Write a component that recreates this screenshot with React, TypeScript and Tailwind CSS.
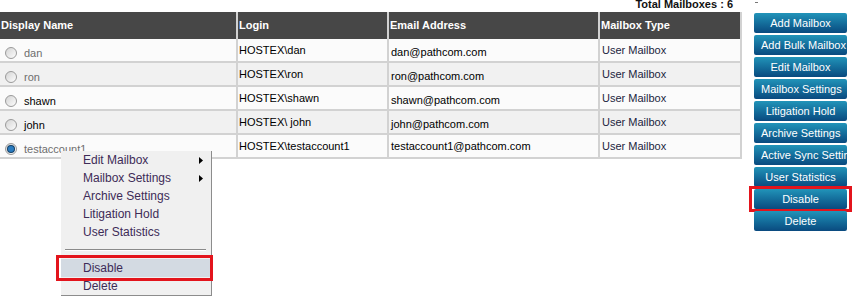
import React from "react";

type Row = {
  name: string;
  login: string;
  email: string;
  dim: boolean;
  checked?: boolean;
};

const rows: Row[] = [
  { name: "dan", login: "HOSTEX\\dan", email: "dan@pathcom.com", dim: true },
  { name: "ron", login: "HOSTEX\\ron", email: "ron@pathcom.com", dim: true },
  { name: "shawn", login: "HOSTEX\\shawn", email: "shawn@pathcom.com", dim: false },
  { name: "john", login: "HOSTEX\\ john", email: "john@pathcom.com", dim: false },
  { name: "testaccount1", login: "HOSTEX\\testaccount1", email: "testaccount1@pathcom.com", dim: true, checked: true },
];

const actions = [
  "Add Mailbox",
  "Add Bulk Mailbox",
  "Edit Mailbox",
  "Mailbox Settings",
  "Litigation Hold",
  "Archive Settings",
  "Active Sync Settings",
  "User Statistics",
  "Disable",
  "Delete",
];

function Radio({ checked }: { checked?: boolean }) {
  return (
    <span className="flex h-[12px] w-[12px] shrink-0 items-center justify-center rounded-full border border-[#9a9a9a] bg-linear-to-br from-[#d4d4d4] to-[#fdfdfd]">
      {checked && <span className="h-[6px] w-[6px] rounded-full bg-[#2a7cc0] ring-1 ring-[#123f66]" />}
    </span>
  );
}

function Arrow() {
  return (
    <svg width="4" height="7" viewBox="0 0 4 7" className="block">
      <polygon points="0,0 4,3.5 0,7" fill="#000" />
    </svg>
  );
}

export default function App() {
  return (
    <div className="relative h-[299px] w-[853px] overflow-hidden bg-white font-['Liberation_Sans',Arial,sans-serif]">
      <div className="flex">
        {/* Mailbox table */}
        <div className="w-[742px]">
          <div className="flex h-[12px] justify-end overflow-hidden pr-[9px]">
            <span className="-mt-[1px] text-[11px] font-bold leading-none text-[#111]">Total Mailboxes : 6</span>
          </div>
          <div className="grid grid-cols-[238px_151px_211px_142px]">
            {["Display Name", "Login", "Email Address", "Mailbox Type"].map((h) => (
              <div
                key={h}
                className="flex h-[27px] items-center border-r-2 border-[#d2d2d2] bg-[#474747] pl-[1px] text-[11px] font-bold text-white"
              >
                {h}
              </div>
            ))}
            {rows.map((r, i) => {
              const bg = i % 2 === 1 ? "bg-[#f1f1f1]" : "bg-[#fbfbfb]";
              return (
                <React.Fragment key={r.name}>
                  <div className={`flex h-[24px] items-center gap-[7px] border-r-2 border-b-2 border-[#d2d2d2] pt-[6px] pl-[5px] ${bg}`}>
                    <Radio checked={r.checked} />
                    <span className={`text-[11px] ${r.dim ? "text-[#6e6e6e]" : "text-black"}`}>{r.name}</span>
                  </div>
                  <div className={`flex h-[24px] items-center border-r-2 border-b-2 border-[#d2d2d2] pl-[1px] text-[11px] text-black ${bg}`}>
                    {r.login}
                  </div>
                  <div className={`flex h-[24px] items-center border-r-2 border-b-2 border-[#d2d2d2] pl-[2px] text-[11px] text-black ${bg} ${i === 4 ? "pt-0" : "pt-[5px]"}`}>
                    {r.email}
                  </div>
                  <div className={`flex h-[24px] items-center border-r-2 border-b-2 border-[#d2d2d2] pt-[1px] pl-[2px] text-[11px] text-[#1c2540] ${bg}`}>
                    User Mailbox
                  </div>
                </React.Fragment>
              );
            })}
          </div>
        </div>

        {/* Action buttons */}
        <div className="ml-[12px] flex w-[93px] flex-col">
          <div className="h-[13px] pt-[2px] pl-[1px]">
            <div className="h-[1px] w-[3px] bg-[#777]" />
          </div>
          <div className="flex flex-col gap-[2px]">
            {actions.map((a) => (
              <div key={a} className="relative">
                <div className="h-[20px] overflow-hidden rounded-[2px] bg-linear-to-b from-[#2294b9] to-[#0a4a7f] px-[7px] text-center text-[11px] leading-[20px] whitespace-nowrap text-white">
                  {a}
                </div>
                {a === "Disable" && (
                  <span className="absolute -top-[3px] -right-[5px] -bottom-[3px] -left-[5px] border-[3px] border-[#e3141c]" />
                )}
              </div>
            ))}
          </div>
        </div>
      </div>

      {/* Context menu */}
      <div className="absolute top-[151px] left-[61px] w-[151px] border-r border-b border-[#8c8c8c] bg-[#f0f0f0] text-[12px] text-[#3d2b57]">
        <div className="flex h-[18px] items-center justify-between pr-[8px] pl-[22px]">
          <span>Edit Mailbox</span>
          <Arrow />
        </div>
        <div className="flex h-[18px] items-center justify-between pr-[8px] pl-[22px]">
          <span>Mailbox Settings</span>
          <Arrow />
        </div>
        <div className="flex h-[18px] items-center pl-[22px]">Archive Settings</div>
        <div className="flex h-[18px] items-center pl-[22px]">Litigation Hold</div>
        <div className="flex h-[18px] items-center pl-[22px]">User Statistics</div>
        <div className="flex h-[18px] items-center pr-[5px] pl-[4px]">
          <div className="w-full border-t border-b border-t-[#8a8a8a] border-b-white" />
        </div>
        <div className="relative">
          <div className="flex h-[18px] items-center bg-[#d3dae2] pl-[22px]">Disable</div>
          <span className="absolute -top-[4px] -right-[2px] -bottom-[4px] -left-[5px] border-[3px] border-[#e3141c]" />
        </div>
        <div className="flex h-[18px] items-center pl-[22px]">Delete</div>
      </div>
    </div>
  );
}
